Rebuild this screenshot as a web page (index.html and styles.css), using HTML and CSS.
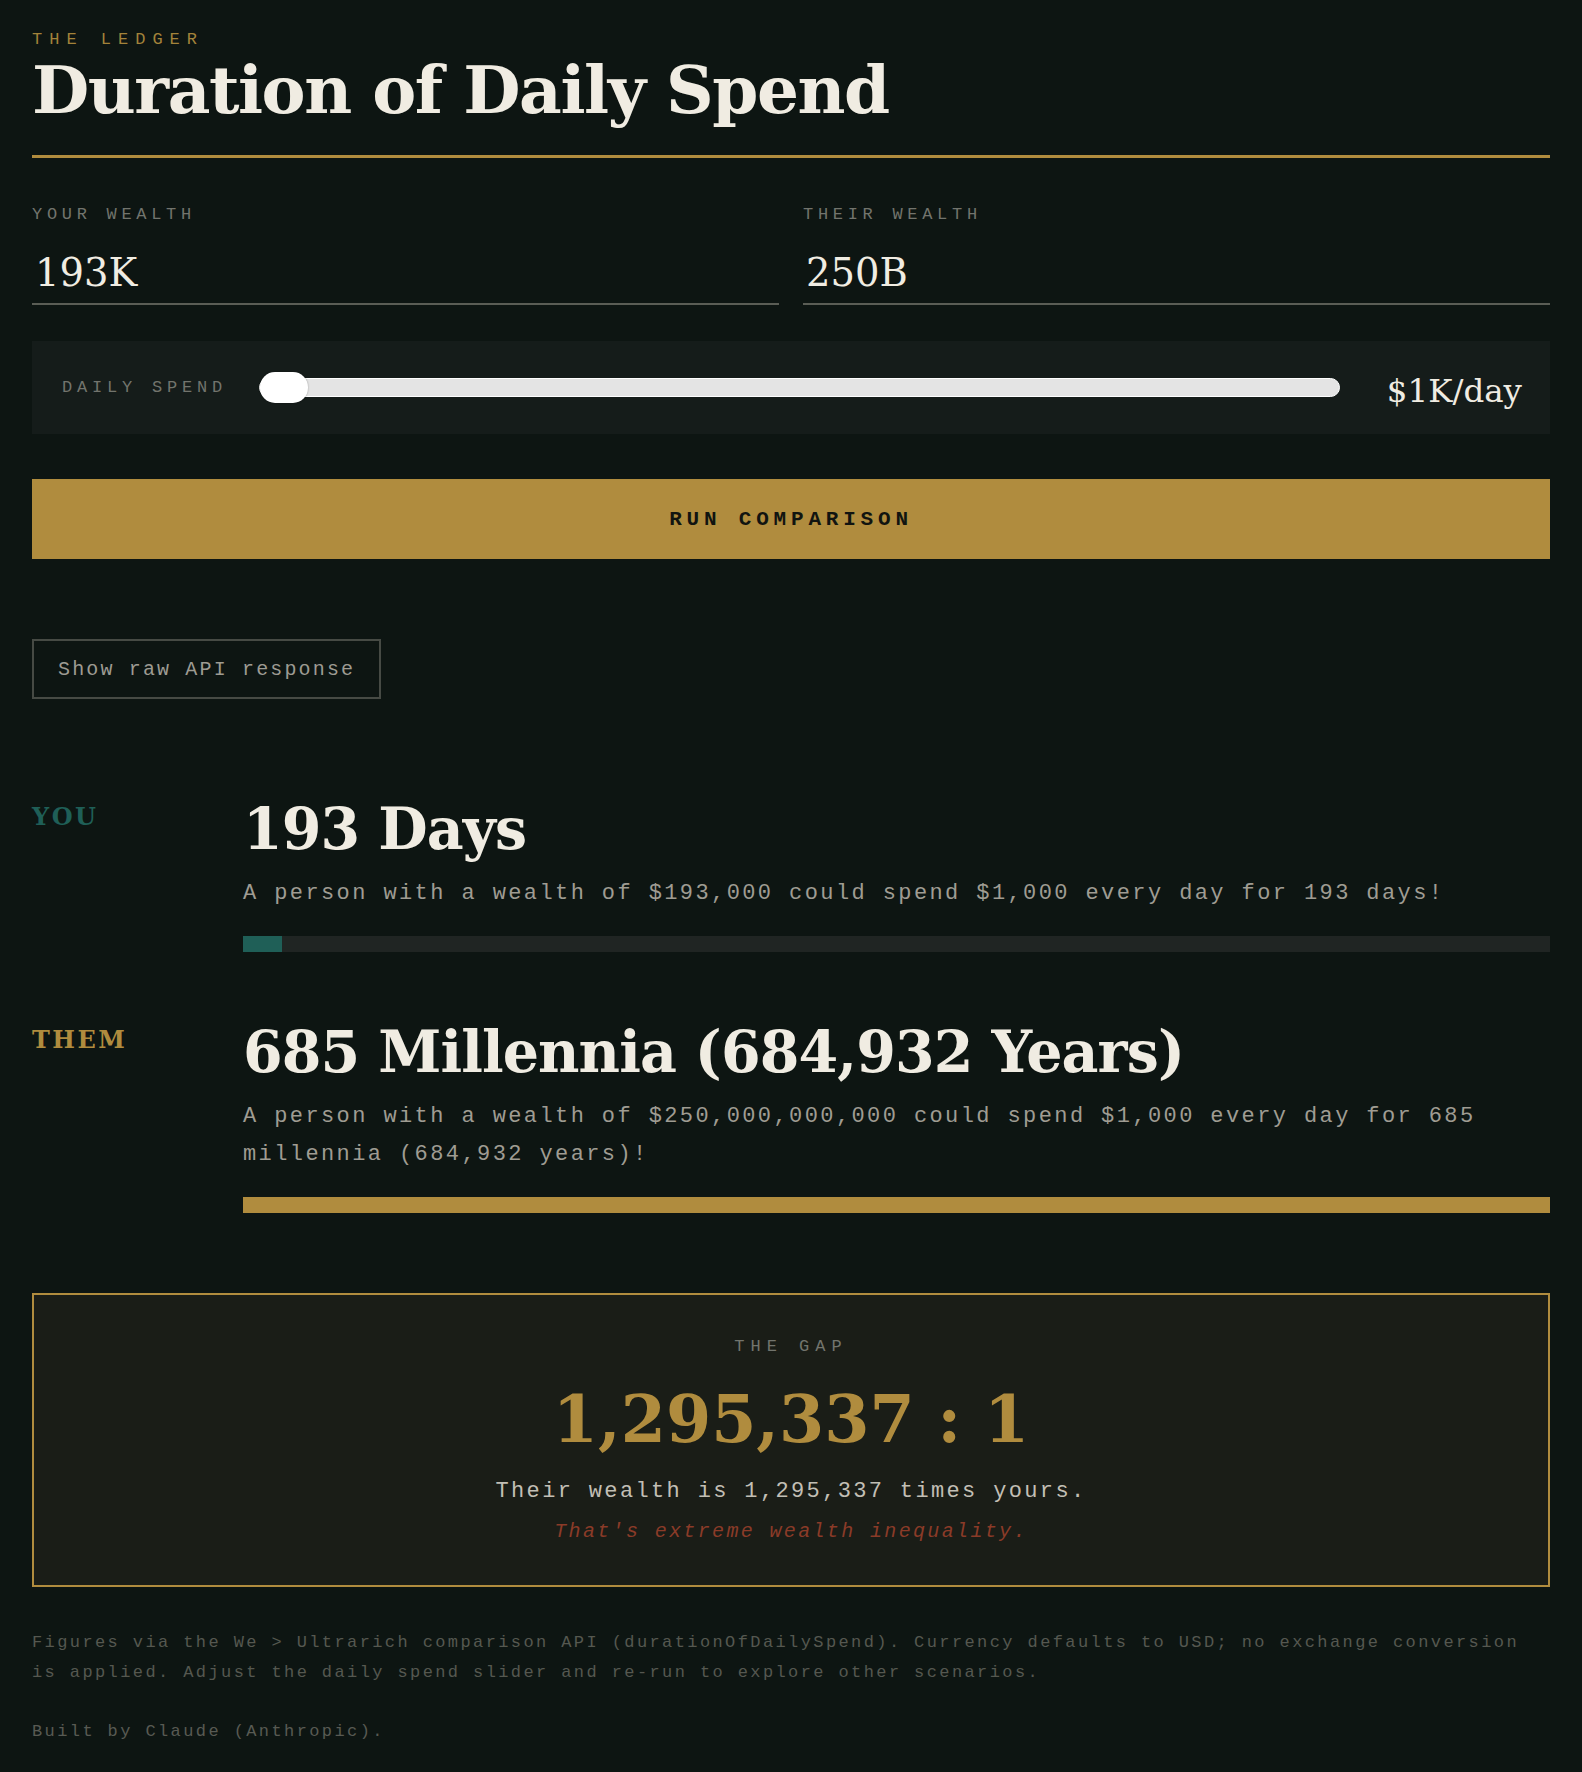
FILE: index.html
```html
<!DOCTYPE html>
<html lang="en">
<head>
<meta charset="utf-8">
<title>The Ledger — Duration of Daily Spend</title>
<link rel="stylesheet" href="styles.css">
</head>
<body>
<main class="page">
  <header class="masthead">
    <div class="eyebrow">THE LEDGER</div>
    <h1 class="title">Duration of Daily Spend</h1>
  </header>

  <section class="inputs">
    <label class="field">
      <span class="field-label">YOUR WEALTH</span>
      <input class="field-input" type="text" value="193K">
    </label>
    <label class="field">
      <span class="field-label">THEIR WEALTH</span>
      <input class="field-input" type="text" value="250B">
    </label>
  </section>

  <section class="spend-panel">
    <span class="spend-label">DAILY SPEND</span>
    <input class="spend-range" type="range" min="0" max="100" value="0">
    <span class="spend-value">$1K/day</span>
  </section>

  <button class="run-btn" type="button">RUN COMPARISON</button>

  <button class="raw-btn" type="button">Show raw API response</button>

  <section class="results">
    <div class="result">
      <div class="who who-you">YOU</div>
      <div class="result-body">
        <div class="result-value">193 Days</div>
        <p class="result-desc">A person with a wealth of $193,000 could spend $1,000 every day for 193 days!</p>
        <div class="bar"><div class="bar-fill fill-you" style="width: 2.96%"></div></div>
      </div>
    </div>
    <div class="result">
      <div class="who who-them">THEM</div>
      <div class="result-body">
        <div class="result-value">685 Millennia (684,932 Years)</div>
        <p class="result-desc">A person with a wealth of $250,000,000,000 could spend $1,000 every day for 685 millennia (684,932 years)!</p>
        <div class="bar"><div class="bar-fill fill-them" style="width: 100%"></div></div>
      </div>
    </div>
  </section>

  <section class="gap-box">
    <div class="gap-label">THE GAP</div>
    <div class="gap-ratio">1,295,337 : 1</div>
    <p class="gap-text">Their wealth is 1,295,337 times yours.</p>
    <p class="gap-verdict">That's extreme wealth inequality.</p>
  </section>

  <footer class="notes">
    <p class="note">Figures via the We &gt; Ultrarich comparison API (durationOfDailySpend). Currency defaults to USD; no exchange conversion is applied. Adjust the daily spend slider and re-run to explore other scenarios.</p>
    <p class="credit">Built by Claude (Anthropic).</p>
  </footer>
</main>
</body>
</html>
```

FILE: styles.css
```css
* { box-sizing: border-box; }

html, body {
  margin: 0;
  padding: 0;
  background: #0d1512;
}

body {
  font-family: "Liberation Mono", "DejaVu Sans Mono", monospace;
  color: #f0ece2;
}

.page {
  padding: 30px 32px 22px;
}

/* Header */
.masthead {
  padding-bottom: 25px;
  border-bottom: 3px solid #b08c3e;
}

.eyebrow {
  font-size: 17px;
  line-height: 20px;
  letter-spacing: 7px;
  color: #a3833a;
}

.title {
  margin: 0;
  font-family: "DejaVu Serif", "Liberation Serif", serif;
  font-weight: 700;
  font-size: 66px;
  line-height: 80px;
  letter-spacing: -1.45px;
  color: #f0ece2;
}

/* Inputs */
.inputs {
  display: grid;
  grid-template-columns: 1fr 1fr;
  column-gap: 24px;
  margin-top: 47px;
}

.field {
  display: flex;
  flex-direction: column;
}

.field-label {
  font-size: 17px;
  line-height: 20px;
  letter-spacing: 4.7px;
  color: #72746d;
  margin-bottom: 24px;
}

.field-input {
  font-family: "DejaVu Serif", "Liberation Serif", serif;
  font-size: 38.5px;
  line-height: 46px;
  height: 56px;
  padding: 0 3px 8px;
  color: #f0ece2;
  background: transparent;
  border: 0;
  border-bottom: 2px solid #5a5d55;
  border-radius: 0;
  outline: none;
  width: 100%;
  box-sizing: border-box;
}

/* Daily spend panel */
.spend-panel {
  display: flex;
  align-items: center;
  gap: 30px;
  margin-top: 36px;
  height: 93px;
  padding: 0 28px 0 30px;
  background: #151c1a;
}

.spend-label {
  font-size: 17px;
  line-height: 20px;
  letter-spacing: 4.8px;
  color: #72746d;
  white-space: nowrap;
}

.spend-range {
  -webkit-appearance: none;
  appearance: none;
  flex: 1;
  min-width: 0;
  height: 31px;
  margin: 0 0 0 2px;
  background: transparent;
}

.spend-range::-webkit-slider-runnable-track {
  height: 17px;
  box-sizing: content-box;
  background: #e4e4e4;
  border: 1px solid #ffffff;
  border-radius: 10px;
}

.spend-range::-webkit-slider-thumb {
  -webkit-appearance: none;
  appearance: none;
  width: 48px;
  height: 31px;
  margin-top: -7px;
  border-radius: 15px;
  background: #ffffff;
  box-shadow: 0 0 2px rgba(0, 0, 0, 0.35);
}

.spend-range::-moz-range-track {
  height: 17px;
  background: #e4e4e4;
  border: 1px solid #ffffff;
  border-radius: 10px;
}

.spend-range::-moz-range-thumb {
  width: 48px;
  height: 31px;
  border: 0;
  border-radius: 15px;
  background: #ffffff;
}

.spend-value {
  width: 152px;
  margin-top: 6px;
  text-align: right;
  font-family: "DejaVu Serif", "Liberation Serif", serif;
  font-size: 32.5px;
  line-height: 38px;
  color: #f0ece2;
  white-space: nowrap;
}

/* Buttons */
.run-btn {
  display: block;
  width: 100%;
  height: 80px;
  margin-top: 45px;
  border: 0;
  border-radius: 0;
  background: #b08c3e;
  color: #111410;
  font-family: "Liberation Mono", "DejaVu Sans Mono", monospace;
  font-weight: 700;
  font-size: 21px;
  letter-spacing: 4.8px;
  cursor: pointer;
}

.raw-btn {
  display: block;
  height: 60px;
  margin-top: 80px;
  padding: 0 24px;
  background: transparent;
  border: 2px solid #464a44;
  border-radius: 0;
  color: #9d9b92;
  font-family: "Liberation Mono", "DejaVu Sans Mono", monospace;
  font-size: 20px;
  letter-spacing: 2.15px;
  cursor: pointer;
}

/* Results */
.results {
  margin-top: 95px;
  display: flex;
  flex-direction: column;
  gap: 65px;
}

.result {
  display: grid;
  grid-template-columns: 211px 1fr;
}

.who {
  padding-top: 8px;
  font-family: "DejaVu Serif", "Liberation Serif", serif;
  font-weight: 700;
  font-size: 24px;
  line-height: 30px;
  letter-spacing: 2.5px;
}

.who-you { color: #1f5f57; }
.who-them { color: #b08c3e; }

.result-value {
  font-family: "DejaVu Serif", "Liberation Serif", serif;
  font-weight: 700;
  font-size: 57px;
  line-height: 70px;
  letter-spacing: -0.9px;
  color: #f0ece2;
}

.result-desc {
  margin: 11px 0 0;
  font-size: 22px;
  line-height: 38px;
  letter-spacing: 2.4px;
  color: #9f9c92;
}

.bar {
  height: 16px;
  margin-top: 23px;
  background: #202523;
}

.bar-fill { height: 100%; }
.fill-you { background: #1f5f57; }
.fill-them { background: #b08c3e; }

/* Gap box */
.gap-box {
  margin-top: 80px;
  padding: 42px 24px 38px;
  border: 2px solid #b08c3e;
  background: #1a1d17;
  text-align: center;
}

.gap-label {
  font-size: 17px;
  line-height: 20px;
  letter-spacing: 6px;
  color: #72746d;
}

.gap-ratio {
  margin-top: 22px;
  font-family: "DejaVu Serif", "Liberation Serif", serif;
  font-weight: 700;
  font-size: 65px;
  line-height: 80px;
  color: #b08c3e;
}

.gap-text {
  margin: 18px 0 0;
  font-size: 22px;
  line-height: 30px;
  letter-spacing: 2.35px;
  color: #c2bfb5;
}

.gap-verdict {
  margin: 10px 0 0;
  font-style: italic;
  font-size: 20px;
  line-height: 30px;
  letter-spacing: 2.35px;
  color: #8b3b28;
}

/* Footer */
.notes {
  margin-top: 41px;
}

.note {
  margin: 0;
  font-size: 17px;
  line-height: 30px;
  letter-spacing: 2.4px;
  color: #555850;
}

.credit {
  margin: 29px 0 0;
  font-size: 17px;
  line-height: 30px;
  letter-spacing: 2.4px;
  color: #585a53;
}
```
